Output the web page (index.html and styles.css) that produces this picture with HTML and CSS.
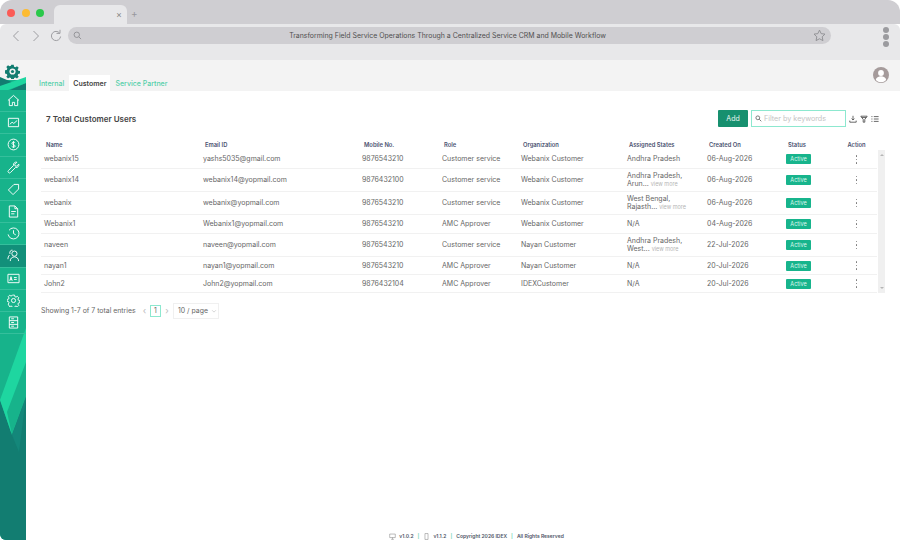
FILE: index.html
```html
<!DOCTYPE html>
<html lang="en">
<head>
<meta charset="utf-8">
<title>Customer Users</title>
<link rel="stylesheet" href="styles.css">
</head>
<body>
<div class="window">
  <div class="tabstrip">
    <div class="lights"><i class="light red"></i><i class="light yellow"></i><i class="light green"></i></div>
    <div class="browser-tab"><span class="tab-x">×</span></div>
    <span class="tab-plus">+</span>
  </div>
  <div class="toolbar">
    <div class="nav">
      <svg class="nav-icon" viewBox="0 0 12 14"><path d="M8.500 2 3.500 7l5 5"/></svg>
      <svg class="nav-icon" viewBox="0 0 12 14"><path d="M3.500 2l5 5-5 5"/></svg>
      <svg class="nav-icon" viewBox="0 0 12 14"><path d="M9.700 4.200A4.600 4.600 0 1 0 10.600 7.500M10 .8v3.600H6.500"/></svg>
    </div>
    <div class="address">
      <svg class="addr-search" viewBox="0 0 10 10"><circle cx="4.200" cy="4.200" r="3"/><path d="M6.500 6.500 9 9"/></svg>
      <span class="addr-title">Transforming Field Service Operations Through a Centralized Service CRM and Mobile Workflow</span>
      <svg class="addr-star" viewBox="0 0 14 14"><path d="M7 1.200l1.800 3.800 4.100.5-3 2.900.8 4.100L7 10.500l-3.700 2 .8-4.100-3-2.900 4.100-.5z"/></svg>
    </div>
    <div class="kebab"><i></i><i></i><i></i></div>
  </div>
  <div class="app">
    <aside class="sidebar">
      <svg class="side-art" viewBox="0 0 26 480" preserveAspectRatio="none">
        <rect width="26" height="480" fill="#17b38b"/>
        <rect width="26" height="20" fill="#f3f3f3"/>
        <path d="M0 17 14 23 0 30z" fill="#127d71"/>
        <path d="M10 30 26 23V30z" fill="#127d71"/>
        <path d="M0 26 26 17V23L8 30H0z" fill="#1ed6a0"/>
        <path d="M0 340 12 375 26 337V480H0z" fill="#127d71"/>
        <path d="M12 375 19 392 26 337z" fill="#14877a"/>
        <path d="M26 268 0 340 12 375 7 352 26 302z" fill="#1ed6a0"/>
      </svg>
      <svg class="logo" viewBox="0 0 16 16"><path d="M6.700.8h2.600l.4 2 1.400.6 1.700-1.100 1.800 1.800-1.100 1.700.6 1.400 2 .4v2.600l-2 .4-.6 1.400 1.100 1.700-1.800 1.800-1.700-1.100-1.400.6-.4 2H6.700l-.4-2-1.400-.6-1.700 1.100-1.800-1.800 1.100-1.700-.6-1.400-2-.4V6.700l2-.4.6-1.400-1.100-1.700 1.800-1.800 1.700 1.100 1.400-.6z" fill="#127d71"/><circle cx="8" cy="8" r="3.300" fill="#f3f3f3"/><circle cx="8" cy="8" r="1.700" fill="#127d71"/></svg>
      <nav class="side-nav">
        <a class="side-item"><svg viewBox="0 0 14 14"><path d="M1 7 7 1.500 13 7M2.500 6v6.500h3.300V9h2.400v3.500h3.300V6"/></svg></a>
        <a class="side-item"><svg viewBox="0 0 14 14"><path d="M1.500 2.500h11v9h-11zM3 9l2.500-2.300 1.800 1.300L11 4.800"/></svg></a>
        <a class="side-item"><svg viewBox="0 0 14 14"><circle cx="7" cy="7" r="5.800"/><path d="M8.800 5.200C8.300 4.300 5.300 4.100 5.300 5.700S8.900 7.300 8.900 8.800 5.600 10 5 8.900M7 3.400v7.200"/></svg></a>
        <a class="side-item"><svg viewBox="0 0 14 14"><path d="M12.700 3.300 10.400 5.600 8.600 5.300 8.400 3.600 10.700 1.300C8.700.700 6.500 2.300 7 4.800L1.600 10.200a1.500 1.500 0 0 0 2.200 2.200L9.200 7c2.400.4 4.100-1.700 3.500-3.700z"/></svg></a>
        <a class="side-item"><svg viewBox="0 0 14 14"><path d="M7.500 1.500h5v5L6.500 12.500 1.500 7.500zM10.300 3.700h.01"/></svg></a>
        <a class="side-item"><svg viewBox="0 0 14 14"><path d="M2.500 1h6l3 3v9h-9zM8.500 1v3h3M4.500 7h5M4.500 9.500h3.500"/></svg></a>
        <a class="side-item"><svg viewBox="0 0 14 14"><path d="M2.200 3.500A5.900 5.900 0 1 1 1.200 8M7 3.500V7l2.500 1.500"/></svg></a>
        <a class="side-item active"><svg viewBox="0 0 14 14"><circle cx="8" cy="5" r="2.800"/><path d="M3.500 13c0-6 9-6 9 0M6 1.300C3.800 1 2.500 3 3.200 5.300M2.800 6.500C1.500 7.600 1 9.300 1 11"/></svg></a>
        <a class="side-item"><svg viewBox="0 0 14 14"><path d="M1 2.500h12v9H1zM3 9.500 4.300 5l1.300 4.500M3.500 8h1.800M7.500 6h3M7.500 8h3"/></svg></a>
        <a class="side-item"><svg viewBox="0 0 14 14"><path d="M5.800 1h2.400l.3 1.700 1.300.6 1.400-1 1.700 1.700-1 1.400.6 1.300 1.500.3v2.400l-1.500.3-.6 1.300 1 1.400-1.700 1.700-1.400-1-1.300.6-.3 1.300H5.800l-.3-1.300-1.300-.6-1.400 1L1.100 11l1-1.400-.6-1.300L0 8V5.800l1.500-.3.600-1.300-1-1.400L2.800 1.100l1.400 1 1.300-.6z" transform="translate(.2 .2) scale(.97)"/><circle cx="7" cy="7" r="2.200"/></svg></a>
        <a class="side-item"><svg viewBox="0 0 14 14"><path d="M2.500 1h9v12h-9zM2.500 5h9M2.500 9h9M4.500 3h3M4.500 7h3M4.500 11h3"/></svg></a>
      </nav>
    </aside>
    <div class="main">
      <header class="topbar">
        <div class="tabs">
          <a class="tab">Internal</a>
          <a class="tab current">Customer</a>
          <a class="tab">Service Partner</a>
        </div>
        <svg class="avatar" viewBox="0 0 16 16"><circle cx="8" cy="8" r="8" fill="#a59b9b"/><circle cx="8" cy="6" r="2.900" fill="#fff"/><path d="M2.800 13c.6-5 9.800-5 10.400 0a7 7 0 0 1-10.400 0z" fill="#fff"/></svg>
      </header>
      <section class="panel">
        <div class="panel-head">
          <h1 class="panel-title">7 Total Customer Users</h1>
          <div class="panel-actions">
            <button class="add-btn">Add</button>
            <div class="filter">
              <svg viewBox="0 0 10 10"><circle cx="4" cy="4" r="2.700"/><path d="M6 6 9 9"/></svg>
              <span>Filter by keywords</span>
            </div>
            <div class="tools">
              <svg viewBox="0 0 10 10"><path d="M5 1v5M3.200 4.500 5 6.300l1.800-1.800M1 7v2h8V7"/></svg>
              <svg viewBox="0 0 10 10"><path d="M1 1.500h8L6 5.500V9H4V5.500zM2 3.200h6"/></svg>
              <svg viewBox="0 0 10 10"><path d="M3.500 2H9.500M3.500 5H9.500M3.500 8H9.500M.5 2h1.300M.5 5h1.300M.5 8h1.300"/></svg>
            </div>
          </div>
        </div>
        <div class="table-wrap">
          <table class="users">
            <colgroup>
              <col class="c-name"><col class="c-email"><col class="c-mobile"><col class="c-role"><col class="c-org"><col class="c-states"><col class="c-date"><col class="c-status"><col class="c-action">
            </colgroup>
            <thead>
              <tr><th>Name</th><th>Email ID</th><th>Mobile No.</th><th>Role</th><th>Organization</th><th>Assigned States</th><th>Created On</th><th>Status</th><th class="center">Action</th></tr>
            </thead>
            <tbody>
              <tr class="short"><td>webanix15</td><td>yashs5035@gmail.com</td><td>9876543210</td><td>Customer service</td><td>Webanix Customer</td><td>Andhra Pradesh</td><td>06-Aug-2026</td><td><span class="badge">Active</span></td><td class="center"><span class="dots"><i></i><i></i><i></i></span></td></tr>
              <tr><td>webanix14</td><td>webanix14@yopmail.com</td><td>9876432100</td><td>Customer service</td><td>Webanix Customer</td><td class="two">Andhra Pradesh,<br>Arun... <small>view more</small></td><td>06-Aug-2026</td><td><span class="badge">Active</span></td><td class="center"><span class="dots"><i></i><i></i><i></i></span></td></tr>
              <tr><td>webanix</td><td>webanix@yopmail.com</td><td>9876543210</td><td>Customer service</td><td>Webanix Customer</td><td class="two">West Bengal,<br>Rajasth... <small>view more</small></td><td>06-Aug-2026</td><td><span class="badge">Active</span></td><td class="center"><span class="dots"><i></i><i></i><i></i></span></td></tr>
              <tr class="mid"><td>Webanix1</td><td>Webanix1@yopmail.com</td><td>9876543210</td><td>AMC Approver</td><td>Webanix Customer</td><td>N/A</td><td>04-Aug-2026</td><td><span class="badge">Active</span></td><td class="center"><span class="dots"><i></i><i></i><i></i></span></td></tr>
              <tr><td>naveen</td><td>naveen@yopmail.com</td><td>9876543210</td><td>Customer service</td><td>Nayan Customer</td><td class="two">Andhra Pradesh,<br>West... <small>view more</small></td><td>22-Jul-2026</td><td><span class="badge">Active</span></td><td class="center"><span class="dots"><i></i><i></i><i></i></span></td></tr>
              <tr class="short"><td>nayan1</td><td>nayan1@yopmail.com</td><td>9876543210</td><td>AMC Approver</td><td>Nayan Customer</td><td>N/A</td><td>20-Jul-2026</td><td><span class="badge">Active</span></td><td class="center"><span class="dots"><i></i><i></i><i></i></span></td></tr>
              <tr class="short"><td>John2</td><td>John2@yopmail.com</td><td>9876432104</td><td>AMC Approver</td><td>IDEXCustomer</td><td>N/A</td><td>20-Jul-2026</td><td><span class="badge">Active</span></td><td class="center"><span class="dots"><i></i><i></i><i></i></span></td></tr>
            </tbody>
          </table>
          <div class="scrollbar"><span class="arrow-up"></span><span class="arrow-down"></span></div>
        </div>
        <div class="pager">
          <span class="pager-info">Showing 1-7 of 7 total entries</span>
          <span class="pager-arrow">‹</span>
          <span class="pager-num">1</span>
          <span class="pager-arrow">›</span>
          <span class="pager-size">10 / page <svg viewBox="0 0 8 8"><path d="M1.500 3 4 5.500 6.500 3"/></svg></span>
        </div>
      </section>
      <footer class="foot">
        <svg viewBox="0 0 10 10"><path d="M1 1.500h8v5H1zM3 9h4M5 6.500V9"/></svg><span>v1.0.2</span><b>|</b>
        <svg viewBox="0 0 10 10"><path d="M2.800 .8h4.400v8.400H2.800z"/></svg><span>v1.1.2</span><b>|</b>
        <span>Copyright 2026 IDEX</span><b>|</b><span>All Rights Reserved</span>
      </footer>
    </div>
  </div>
</div>
</body>
</html>
```
FILE: styles.css
```css
* { box-sizing: border-box; }
html, body { margin: 0; height: 100%; background: #fff; }
body { font-family: Inter, "Liberation Sans", sans-serif; color: #555; overflow: hidden; }
.window { width: 900px; height: 540px; display: flex; flex-direction: column; border-radius: 12px 12px 0 0; overflow: hidden; }

.tabstrip { height: 24px; background: #cfced2; display: flex; align-items: flex-end; padding-left: 7px; flex: none; }
.lights { display: flex; gap: 6.500px; width: 47px; align-self: center; margin-top: 2px; }
.light { width: 8px; height: 8px; border-radius: 50%; }
.red { background: #fb5b56; }
.yellow { background: #fcbb33; }
.green { background: #2ac84a; }
.browser-tab { width: 73px; height: 19px; background: #e8e8ea; border-radius: 6px 6px 0 0; display: flex; justify-content: flex-end; align-items: center; padding-right: 5px; }
.tab-x { font-size: 9px; color: #888; }
.tab-plus { font-size: 10px; color: #98989c; margin: 0 0 5px 4px; }

.toolbar { height: 36px; background: #e8e8ea; display: flex; align-items: flex-start; padding: 3px 0 0 10px; flex: none; border-radius: 6px 6px 0 0; }
.nav { display: flex; gap: 8px; width: 58px; padding-top: 2px; }
.nav-icon { width: 12px; height: 14px; fill: none; stroke: #9d9da1; stroke-width: 1; }
.address { width: 763px; height: 17px; background: #cfced2; border-radius: 9px; display: flex; align-items: center; padding: 0 5px 0 5px; }
.addr-search { width: 9px; height: 9px; fill: none; stroke: #8f8f93; stroke-width: 1; flex: none; }
.addr-title { flex: 1; text-align: center; font-size: 6.950px; color: #4f4f4f; white-space: nowrap; }
.addr-star { width: 13px; height: 13px; fill: none; stroke: #8f8f93; stroke-width: 1; flex: none; }
.kebab { display: flex; flex-direction: column; gap: 1px; margin-left: 52px; }
.kebab i { width: 6px; height: 6px; border-radius: 50%; background: #9b9b9f; }

.app { flex: 1; display: flex; min-height: 0; }
.sidebar { width: 26px; flex: none; position: relative; border-bottom-left-radius: 6px; overflow: hidden; display: flex; flex-direction: column; align-items: center; }
.side-art { position: absolute; inset: 0; width: 26px; height: 480px; }
.logo { position: relative; width: 15px; height: 15px; margin: 4px 2px 0 0; }
.side-nav { position: relative; margin-top: 11px; width: 100%; display: flex; flex-direction: column; }
.side-item { height: 22.200px; display: flex; align-items: center; justify-content: center; border-bottom: 1px solid #35bf9c; }
.side-item svg { width: 13px; height: 13px; fill: none; stroke: #fff; stroke-width: 1; }
.side-item.active { background: #12907a; }

.main { flex: 1; display: flex; flex-direction: column; min-width: 0; }
.topbar { height: 31px; background: #f3f3f3; display: flex; justify-content: space-between; align-items: flex-end; padding: 0 11px 0 9px; flex: none; }
.tabs { display: flex; }
.tab { height: 16px; padding: 0 4px; display: flex; align-items: center; font-size: 7px; font-weight: 500; color: #53cfa9; }
.tab.current { background: #fff; color: #444; font-weight: 600; margin: 0 1px; }
.avatar { width: 16px; height: 16px; margin-bottom: 8px; }

.panel { flex: 1; padding: 19px 0 0 15px; }
.panel-head { display: flex; justify-content: space-between; align-items: center; height: 17px; padding: 0 21px 0 5px; }
.panel-title { margin: 0; font-size: 8px; font-weight: 600; color: #444; }
.panel-actions { display: flex; align-items: center; gap: 3px; }
.add-btn { width: 30px; height: 17px; border: 0; border-radius: 1px; background: #17906f; color: #e9f7f2; font: 400 7px Inter, sans-serif; padding: 0; }
.filter { width: 95px; height: 17px; border: 1px solid #8de8cf; display: flex; align-items: center; gap: 2px; padding-left: 3px; font-size: 7.200px; color: #c4c4c4; }
.filter svg { width: 7px; height: 7px; fill: none; stroke: #666; stroke-width: 1.200; flex: none; }
.tools { display: flex; gap: 3px; }
.tools svg { width: 8px; height: 8px; fill: none; stroke: #444; stroke-width: 1; }

.table-wrap { display: flex; margin-top: 12px; width: 844px; }
.users { table-layout: fixed; border-collapse: collapse; width: 836px; font-size: 7px; color: #666; }
.c-name, .c-email { width: 159px; }
.c-mobile { width: 80px; }
.c-role { width: 79px; }
.c-org { width: 106px; }
.c-states { width: 80px; }
.c-date { width: 79px; }
.c-status { width: 53px; }
.c-action { width: 41px; }
.users th { height: 11px; padding: 0 0 0 5px; text-align: left; font-size: 5.800px; font-weight: 600; color: #4a5170; }
.users th.center { padding: 0; }
.users td { padding: 1px 3px 0; height: 23px; border-bottom: 1px solid #f1f1f1; line-height: 8px; white-space: nowrap; overflow: hidden; }
.users tr.short td { height: 18px; }
.users tr.mid td { height: 19px; }
.users .center { text-align: center; }
.users small { font-size: 5.500px; color: #b5b5b5; }
.badge { display: inline-block; width: 25px; height: 10px; line-height: 10px; background: #17b48c; color: #dff8ef; font-size: 5.500px; text-align: center; border-radius: 1px; }
.dots { display: inline-flex; flex-direction: column; gap: 2px; vertical-align: middle; }
.dots i { width: 1.500px; height: 1.500px; background: #777; border-radius: 50%; }
.scrollbar { width: 7px; background: #f0f0f0; margin: 11px 0 0 1px; display: flex; flex-direction: column; justify-content: space-between; align-items: center; padding: 4px 0; }
.arrow-up { border: 2px solid transparent; border-bottom: 2.500px solid #b5b5b5; border-top: 0; }
.arrow-down { border: 2px solid transparent; border-top: 2.500px solid #b5b5b5; border-bottom: 0; }

.pager { display: flex; align-items: center; margin-top: 10px; font-size: 6.900px; color: #666; }
.pager-info { width: 98px; }
.pager-arrow { width: 12px; text-align: center; color: #bbb; font-size: 9px; }
.pager-arrow:nth-child(2) { width: 11px; }
.pager-num { width: 11px; height: 12px; border: 1px solid #8de8cf; display: flex; align-items: center; justify-content: center; }
.pager-size { width: 46px; height: 16px; border: 1px solid #f0f0f0; display: flex; align-items: center; gap: 3px; padding-left: 4px; }
.pager-size svg { width: 6px; height: 6px; fill: none; stroke: #bbb; stroke-width: .8; }

.foot { height: 12px; display: flex; justify-content: center; align-items: center; gap: 3px; font-size: 5px; font-weight: 600; color: #4e5566; flex: none; padding: 4px 0 0 27px; }
.foot svg { width: 7px; height: 7px; fill: none; stroke: #777; stroke-width: .7; }
.foot b { color: #5fd2b0; margin: 0 1px; font-weight: 600; }
```
